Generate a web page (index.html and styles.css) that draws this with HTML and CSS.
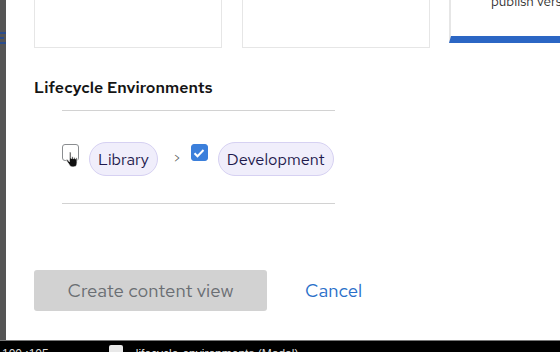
FILE: index.html
```html
<!DOCTYPE html>
<html>
<head>
<meta charset="utf-8">
<link rel="stylesheet" href="styles.css">
</head>
<body>
<div class="screen">
  <div class="backdrop">
    <span class="bd-mark"></span>
    <span class="bd-mark short"></span>
    <span class="bd-mark"></span>
  </div>
  <div class="modal">
    <div class="cards">
      <div class="card"></div>
      <div class="card"></div>
      <div class="card selected"><span class="card-text">publish version</span></div>
    </div>
    <h2 class="section-title">Lifecycle Environments</h2>
    <div class="env-path">
      <div class="env-row">
        <span class="check">
          <svg class="cursor" width="15" height="17" viewBox="0 0 14 16"><path d="M4 1.5c0-.8 1.6-.8 1.6 0V7h.4V5.8c0-.8 1.5-.8 1.5 0V7.2h.4V6.5c0-.8 1.5-.8 1.5 0v1h.4V7c0-.8 1.5-.8 1.5 0v4.2c0 2-1 3.8-3 3.8H6.7C5.6 15 4.8 14.4 4.2 13.4L1.3 9.2c-.5-.8.5-1.5 1.1-.9L4 10z" fill="#111" stroke="#fff" stroke-width=".8"/></svg>
        </span>
        <span class="chip">Library</span>
        <span class="arrow">&gt;</span>
        <span class="check checked">
          <svg width="12" height="10" viewBox="0 0 12 10"><path d="M1.5 5.2l3 3 6-6.2" fill="none" stroke="#fff" stroke-width="2"/></svg>
        </span>
        <span class="chip">Development</span>
      </div>
    </div>
    <div class="actions">
      <button class="btn-primary" disabled>Create content view</button>
      <button class="btn-link">Cancel</button>
    </div>
  </div>
</div>
<div class="taskbar">
  <span class="tb-text">100 ;105</span>
  <span class="tb-icon"></span>
  <span class="tb-text">lifecycle-environments (Modal)</span>
</div>
</body>
</html>
```
FILE: styles.css
```css
* { box-sizing: border-box; }
html, body { margin: 0; padding: 0; }
body {
  width: 560px;
  height: 352px;
  overflow: hidden;
  background: #fff;
  font-family: "Red Hat Text", "Open Sans", "Liberation Sans", sans-serif;
}
.screen {
  display: flex;
  height: 340px;
}
.backdrop {
  width: 6px;
  background: #555;
  display: flex;
  flex-direction: column;
  padding-top: 32px;
  gap: 3px;
}
.bd-mark {
  display: block;
  height: 2px;
  width: 6px;
  background: #2b4c8c;
}
.bd-mark.short { width: 4px; }
.modal {
  flex: 1;
  background: #fff;
  padding-left: 28px;
  overflow: hidden;
}
.cards {
  display: grid;
  grid-template-columns: 188px 188px 1fr;
  column-gap: 20px;
  height: 48px;
}
.cards .card:nth-child(3) { margin-left: -1px; }
.card {
  border: 1px solid #e6e6e6;
  border-top: none;
  height: 48px;
  background: #fff;
}
.card.selected {
  height: 43px;
  border-right: none;
  border-bottom: 7px solid #2b66c4;
  border-left: 2px solid #e6e6e6;
  position: relative;
}
.card-text {
  display: block;
  margin-top: -7px;
  padding-left: 40px;
  font-size: 13.5px;
  line-height: 16px;
  color: #333;
  white-space: nowrap;
}
.section-title {
  margin: 29px 0 0 0;
  font-size: 16px;
  line-height: 22px;
  font-weight: 600;
  color: #151515;
  letter-spacing: 0.05px;
}
.env-path {
  margin-top: 11px;
  margin-left: 28px;
  width: 273px;
  border-top: 1px solid #d2d2d2;
  border-bottom: 1px solid #d2d2d2;
  height: 94px;
  padding-top: 31px;
}
.env-row {
  display: flex;
  align-items: flex-start;
}
.check {
  position: relative;
  width: 17px;
  height: 17px;
  margin-top: 2px;
  border: 1px solid #8a8d90;
  border-radius: 3px;
  background: #fff;
  display: flex;
  align-items: center;
  justify-content: center;
}
.check.checked {
  background: #3b7fdb;
  border-color: #3b7fdb;
}
.cursor {
  position: absolute;
  left: 2px;
  top: 6px;
}
.chip {
  margin-left: 10px;
  height: 34px;
  padding: 0 8px;
  border: 1px solid #d6d1f2;
  border-radius: 17px;
  background: #f0eefb;
  color: #1f1a4d;
  font-size: 16.3px;
  line-height: 32px;
}
.arrow {
  margin: 9px 10px 0 15px;
  font-size: 13px;
  line-height: 16px;
  color: #555;
}
.arrow + .check { margin-left: 0; }
.actions {
  margin-top: 66px;
  display: flex;
  align-items: center;
  gap: 38px;
}
.btn-primary {
  width: 233px;
  height: 41px;
  border: none;
  border-radius: 3px;
  background: #d2d2d2;
  color: #6a6e73;
  font-family: inherit;
  font-size: 18.6px;
  padding: 0;
}
.btn-link {
  border: none;
  background: none;
  padding: 0;
  color: #2a6fc9;
  font-family: inherit;
  font-size: 18.6px;
}
.taskbar {
  height: 12px;
  background: #000;
  border-top: 1px solid #777;
  display: flex;
  align-items: flex-start;
  overflow: hidden;
  padding-left: 2px;
}
.tb-text {
  color: #ddd;
  font-size: 12px;
  line-height: 12px;
  margin-top: 7px;
  font-family: "Liberation Sans", sans-serif;
  white-space: nowrap;
}
.tb-icon {
  width: 14px;
  height: 12px;
  margin: 4px 13px 0 60px;
  background: #e8e8e8;
  border-radius: 2px;
}
```
